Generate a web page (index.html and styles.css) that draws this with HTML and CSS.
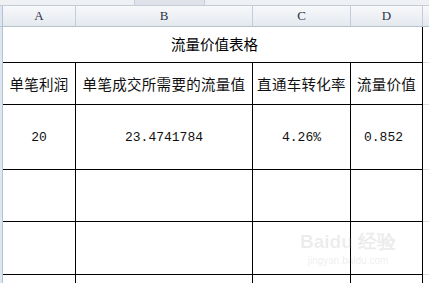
FILE: index.html
```html
<!DOCTYPE html>
<html lang="zh">
<head>
<meta charset="utf-8">
<link rel="stylesheet" href="styles.css">
</head>
<body>
<div class="screen">
  <div class="topbar"><div class="thumb"></div></div>
  <div class="colheads">
    <div class="corner"></div>
    <div class="ch ch-a">A</div>
    <div class="ch ch-b">B</div>
    <div class="ch ch-c">C</div>
    <div class="ch ch-d">D</div>
    <div class="ch ch-e"></div>
  </div>
  <div class="sheet">
    <div class="rowhead"></div>
    <div class="grid">
      <div class="cell title">流量价值表格</div>
      <div class="cell edge"></div>

      <div class="cell cjk">单笔利润</div>
      <div class="cell cjk">单笔成交所需要的流量值</div>
      <div class="cell cjk">直通车转化率</div>
      <div class="cell cjk">流量价值</div>
      <div class="cell edge"></div>

      <div class="cell num">20</div>
      <div class="cell num">23.4741784</div>
      <div class="cell num">4.26%</div>
      <div class="cell num nudge">0.852</div>
      <div class="cell edge"></div>

      <div class="cell"></div>
      <div class="cell"></div>
      <div class="cell"></div>
      <div class="cell"></div>
      <div class="cell edge"></div>

      <div class="cell"></div>
      <div class="cell"></div>
      <div class="cell"></div>
      <div class="cell"></div>
      <div class="cell edge"></div>

      <div class="cell tail"></div>
      <div class="cell tail"></div>
      <div class="cell tail"></div>
      <div class="cell tail"></div>
      <div class="cell tail edge"></div>
    </div>
  </div>
  <div class="watermark">
    <div class="wm-logo">Bai<span class="paw">du</span> 经验</div>
    <div class="wm-url">jingyan.baidu.com</div>
  </div>
</div>
</body>
</html>
```

FILE: styles.css
```css
* { box-sizing: border-box; margin: 0; padding: 0; }
html, body { width: 429px; height: 283px; overflow: hidden; background: #fff; }
.screen { position: relative; width: 429px; height: 283px; overflow: hidden; }

.topbar {
  height: 6px;
  background: #eef0f3;
  border-bottom: 1px solid #c5ccd6;
  display: flex;
}
.thumb { margin-left: 134px; width: 71px; height: 5px; background: #dfe3e9; border-left: 1px solid #c9ced6; border-right: 1px solid #c9ced6; }

.colheads {
  display: grid;
  grid-template-columns: 3px 73px 177px 98px 72px 6px;
  height: 21px;
  background: linear-gradient(#f7f8fa, #e4e9ef);
  border-bottom: 1px solid #b7c2cf;
}
.corner { background: #dce5f0; border-right: 1px solid #b7c2cf; }
.ch {
  font-family: "Liberation Serif", "DejaVu Serif", serif;
  font-size: 13px;
  color: #2a3345;
  display: flex; align-items: center; justify-content: center;
  border-right: 1px solid #c3ccd8;
}
.ch-e { border-right: none; }

.sheet { display: flex; }
.rowhead { width: 3px; height: 256px; background: #dde7f2; border-right: 1px solid #b7c2cf; }
.grid {
  display: grid;
  grid-template-columns: 73px 177px 98px 72px 6px;
  grid-template-rows: 36px 42px 65px 52px 53px 8px;
}
.cell {
  border-right: 1px solid #000;
  border-bottom: 1px solid #000;
  display: flex; align-items: center; justify-content: center;
  color: #000;
}
.title {
  grid-column: 1 / 5;
  font-family: "Noto Sans CJK SC", sans-serif;
  font-size: 14.5px;
  padding-left: 4px;
  padding-bottom: 2px;
}
.cjk {
  font-family: "Noto Sans CJK SC", sans-serif;
  font-size: 14.5px;
  white-space: nowrap;
  letter-spacing: 0.3px;
  color: #111;
}
.num {
  font-family: "Liberation Mono", "DejaVu Sans Mono", monospace;
  font-size: 13px;
  color: #111;
}
.nudge { padding-right: 6px; }
.edge { border-right: none; border-bottom: 1px solid #e0e0e0; }
.tail { border-bottom: none; }

.watermark {
  position: absolute;
  left: 300px;
  top: 232px;
  color: rgba(170,170,170,0.22);
  font-family: "Liberation Sans", sans-serif;
  text-align: center;
}
.wm-logo { font-size: 19px; font-weight: bold; line-height: 20px; }
.wm-url { font-size: 10px; line-height: 14px; margin-top: 2px; }
.paw { color: rgba(160,160,160,0.2); }
```
